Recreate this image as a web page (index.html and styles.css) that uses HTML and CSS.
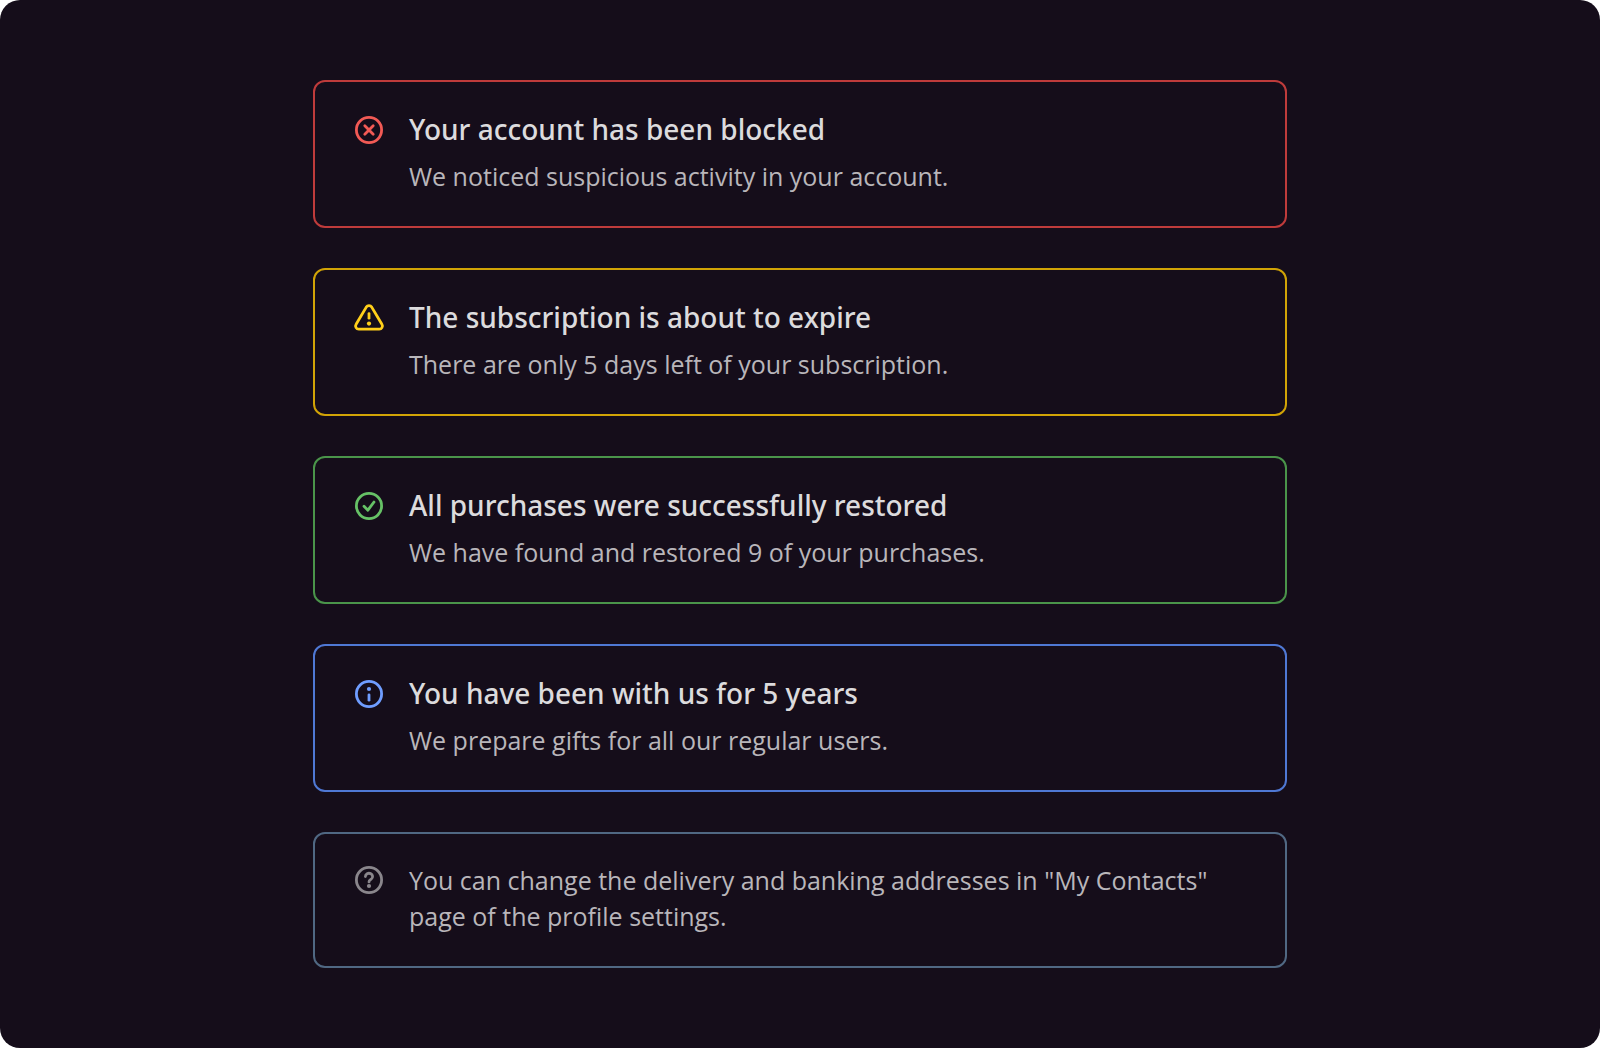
FILE: index.html
```html
<!DOCTYPE html>
<html lang="en">
<head>
  <meta charset="UTF-8" />
  <meta name="viewport" content="width=device-width, initial-scale=1" />
  <title>Notifications</title>
  <link rel="stylesheet" href="styles.css">
</head>
<body>

  <main class="page">
    <section class="notice notice-error">
      <svg class="notice-icon" viewBox="0 0 32 32" aria-hidden="true">
        <circle cx="16" cy="16" r="12.6" />
        <path d="M11.8 11.8l8.4 8.4M20.2 11.8l-8.4 8.4" />
      </svg>
      <div class="notice-body">
        <h2>Your account has been blocked</h2>
        <p>We noticed suspicious activity in your account.</p>
      </div>
    </section>

    <section class="notice notice-warning">
      <svg class="notice-icon" viewBox="0 0 32 32" aria-hidden="true">
        <path d="M13.3 5.1a3.2 3.2 0 0 1 5.4 0l10.2 17.2a3.2 3.2 0 0 1-2.8 4.9H5.9a3.2 3.2 0 0 1-2.8-4.9z" />
        <path d="M16 11.6v4.6" />
        <circle class="dot" cx="16" cy="21.6" r="2.1" />
      </svg>
      <div class="notice-body">
        <h2>The subscription is about to expire</h2>
        <p>There are only 5 days left of your subscription.</p>
      </div>
    </section>

    <section class="notice notice-success">
      <svg class="notice-icon" viewBox="0 0 32 32" aria-hidden="true">
        <circle cx="16" cy="16" r="12.6" />
        <path d="M11 16.2l3.9 4L21 12" />
      </svg>
      <div class="notice-body">
        <h2>All purchases were successfully restored</h2>
        <p>We have found and restored 9 of your purchases.</p>
      </div>
    </section>

    <section class="notice notice-info">
      <svg class="notice-icon" viewBox="0 0 32 32" aria-hidden="true">
        <circle cx="16" cy="16" r="12.6" />
        <circle class="dot" cx="16" cy="11" r="2.1" />
        <path d="M16 16.8v5.4" />
      </svg>
      <div class="notice-body">
        <h2>You have been with us for 5 years</h2>
        <p>We prepare gifts for all our regular users.</p>
      </div>
    </section>

    <section class="notice notice-hint">
      <svg class="notice-icon" viewBox="0 0 32 32" aria-hidden="true">
        <circle cx="16" cy="16" r="12.6" />
        <path d="M12.4 12.6a3.6 3.3 0 1 1 5.8 2.6c-1.4 1-2.2 1.2-2.2 2.7" />
        <circle class="dot" cx="16" cy="22" r="2.1" />
      </svg>
      <div class="notice-body">
        <p>You can change the delivery and banking addresses in "My Contacts" page of the profile settings.</p>
      </div>
    </section>
  </main>

</body>
</html>
```
FILE: styles.css
```css
* {
  box-sizing: border-box;
}
body {
  margin: 0;
  background: #fff;
  font-family: 'Open Sans', 'Noto Sans', sans-serif;
}
.page {
  min-height: 100vh;
  padding: 80px 24px;
  border-radius: 20px;
  background: #150d1a;
  display: flex;
  flex-direction: column;
  align-items: center;
  gap: 40px;
}
.notice {
  width: 100%;
  max-width: 974px;
  padding: 28px 38px 32px;
  border: 2px solid;
  border-radius: 12px;
  display: flex;
  align-items: flex-start;
  gap: 24px;
}
.notice-body {
  flex: 1;
}
.notice h2 {
  margin: 0 0 10px;
  font-family: 'Noto Sans', sans-serif;
  font-size: 28px;
  line-height: 38px;
  font-weight: 500;
  color: #dcdbdd;
}
.notice p {
  margin: 0;
  font-size: 25px;
  line-height: 36px;
  color: #b9b6ba;
}
.notice-icon {
  flex: none;
  width: 32px;
  height: 32px;
  margin-top: 4px;
  fill: none;
  stroke: currentColor;
  stroke-width: 2.8;
  stroke-linecap: round;
  stroke-linejoin: round;
}
.notice-icon .dot {
  fill: currentColor;
  stroke: none;
}
.notice-error {
  border-color: #bf3b3b;
}
.notice-error .notice-icon {
  color: #f25a55;
}
.notice-warning {
  border-color: #d1a306;
}
.notice-warning .notice-icon {
  color: #ffcf1a;
}
.notice-success {
  border-color: #4a944a;
}
.notice-success .notice-icon {
  color: #66c166;
}
.notice-info {
  border-color: #4f78d4;
}
.notice-info .notice-icon {
  color: #6f9dff;
}
.notice-hint {
  border-color: #506883;
}
.notice-hint .notice-icon {
  margin-top: 2px;
  color: #8a868c;
}
```
